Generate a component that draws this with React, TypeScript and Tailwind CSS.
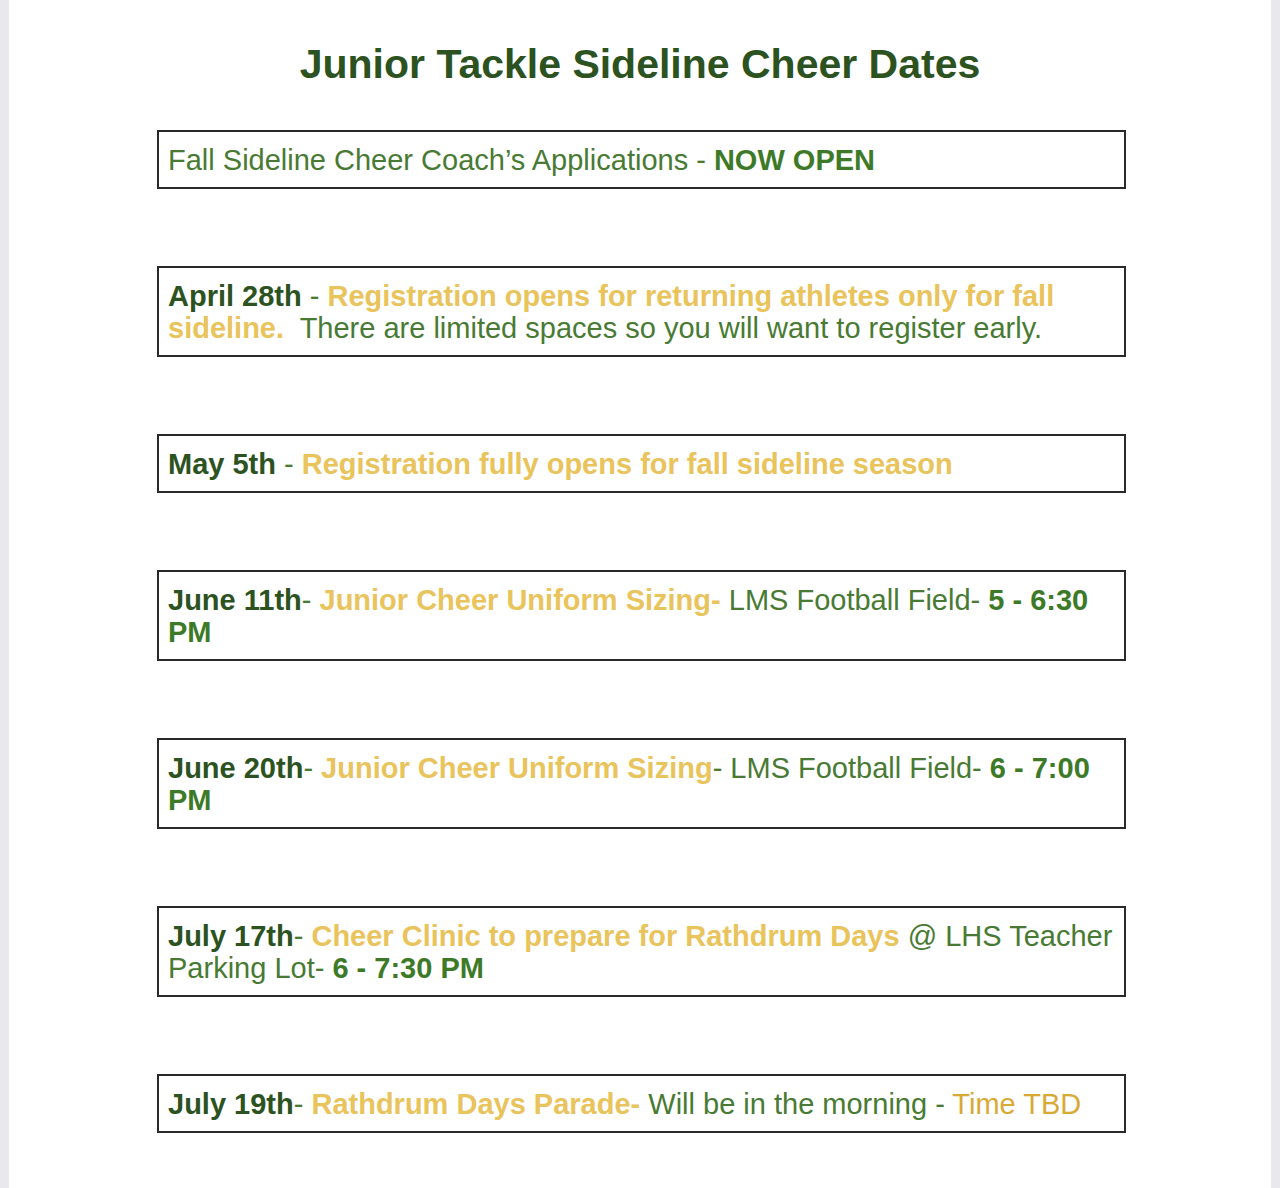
import React from "react";

const dark = "text-[#2b521f]";
const green = "text-[#487a33]";
const gold = "text-[#e9c35b]";
const boldGreen = "text-[#3d7a28]";

function Box({ children }: { children: React.ReactNode }) {
  return (
    <div className="border-2 border-[#2a2a2a] pl-[9px] pr-[4px] py-[11.5px] text-[29px] leading-[32px]">
      {children}
    </div>
  );
}

export default function App() {
  return (
    <div
      className="min-h-[1188px] bg-[#e8e8ed] px-[9px]"
      style={{ fontFamily: '"Liberation Sans", Arial, sans-serif' }}
    >
      <div className="min-h-[1188px] bg-white pt-[39px]">
        <h1 className={`text-center text-[41px] font-bold leading-[50px] ${dark}`}>
          Junior Tackle Sideline Cheer Dates
        </h1>

        <div className="ml-[148px] mt-[41px] flex w-[969px] flex-col gap-[77px]">
          <Box>
            <span className={green}>Fall Sideline Cheer Coach’s Applications - </span>
            <span className={`font-bold ${boldGreen}`}>NOW OPEN</span>
          </Box>

          <Box>
            <span className={`font-bold ${dark}`}>April 28th</span>
            <span className={green}> - </span>
            <span className={`font-bold ${gold}`}>Registration opens for returning athletes only for fall sideline.</span>
            <span className={green}>&nbsp; There are limited spaces so you will want to register early.</span>
          </Box>

          <Box>
            <span className={`font-bold ${dark}`}>May 5th</span>
            <span className={green}> - </span>
            <span className={`font-bold ${gold}`}>Registration fully opens for fall sideline season</span>
          </Box>

          <Box>
            <span className={`font-bold ${dark}`}>June 11th</span>
            <span className={green}>- </span>
            <span className={`font-bold ${gold}`}>Junior Cheer Uniform Sizing- </span>
            <span className={green}>LMS Football Field- </span>
            <span className={`font-bold ${boldGreen}`}>5 - 6:30 PM</span>
          </Box>

          <Box>
            <span className={`font-bold ${dark}`}>June 20th</span>
            <span className={green}>- </span>
            <span className={`font-bold ${gold}`}>Junior Cheer Uniform Sizing</span>
            <span className={green}>- LMS Football Field- </span>
            <span className={`font-bold ${boldGreen}`}>6 - 7:00 PM</span>
          </Box>

          <Box>
            <span className={`font-bold ${dark}`}>July 17th</span>
            <span className={green}>- </span>
            <span className={`font-bold ${gold}`}>Cheer Clinic to prepare for Rathdrum Days</span>
            <span className={green}> @ LHS Teacher Parking Lot- </span>
            <span className={`font-bold ${boldGreen}`}>6 - 7:30 PM</span>
          </Box>

          <Box>
            <span className={`font-bold ${dark}`}>July 19th</span>
            <span className={green}>- </span>
            <span className={`font-bold ${gold}`}>Rathdrum Days Parade- </span>
            <span className={green}>Will be in the morning - </span>
            <span className="text-[#d9a936]">Time TBD</span>
          </Box>
        </div>
      </div>
    </div>
  );
}
